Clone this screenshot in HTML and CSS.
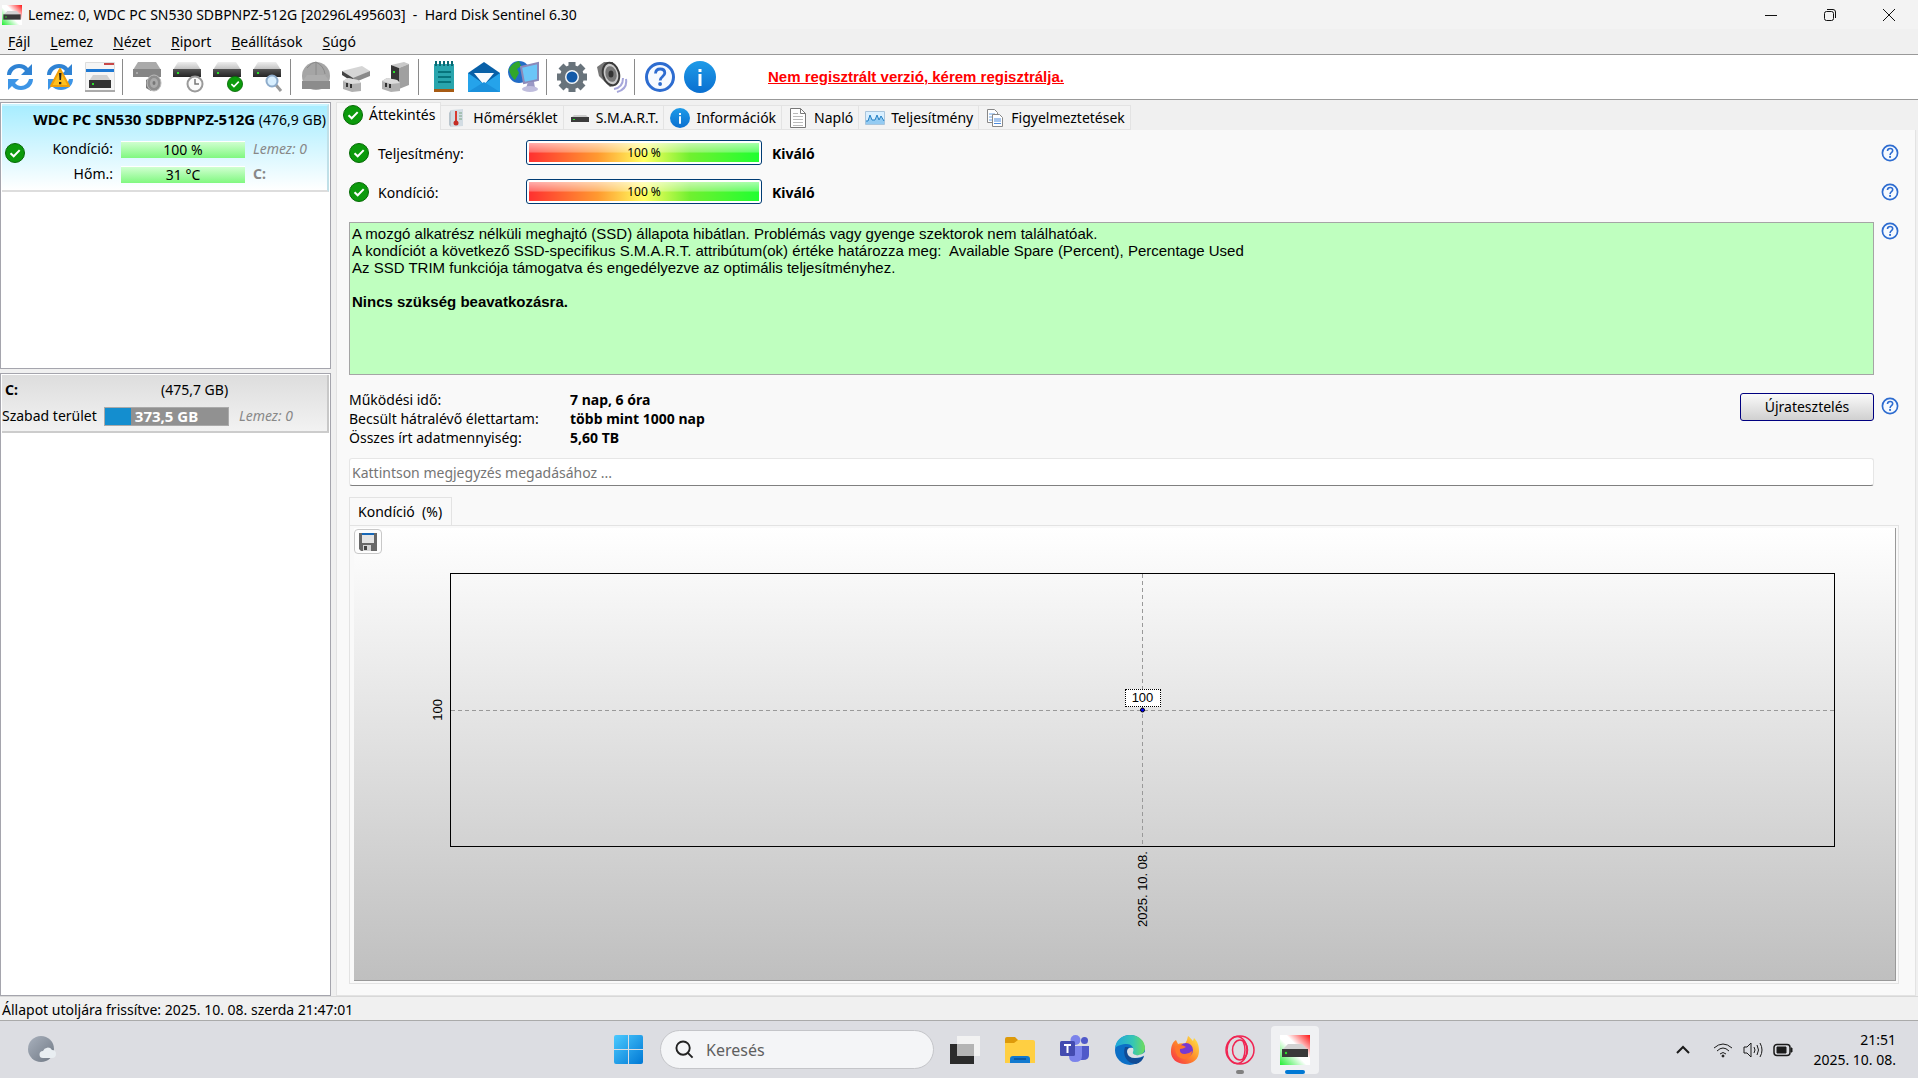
FILE: index.html
```
<!DOCTYPE html>
<html lang="hu">
<head>
    <meta charset="UTF-8">
    <meta name="viewport" content="width=device-width, initial-scale=1.0">
    <title>Hard Disk Sentinel 6.30</title>
    <link rel="stylesheet" href="styles.css">
</head>
<body>
    <!-- Közös ikonok -->
    <svg class="sprites" aria-hidden="true">
        <defs>
            <linearGradient id="blue" x1="0" y1="0" x2="0" y2="1"><stop offset="0" stop-color="#1e9be8"/><stop offset="1" stop-color="#0a6fd0"/></linearGradient>
            <linearGradient id="metal" x1="0" y1="0" x2="0" y2="1"><stop offset="0" stop-color="#eeeeee"/><stop offset="1" stop-color="#bdbdbd"/></linearGradient>
            <linearGradient id="dark" x1="0" y1="0" x2="0" y2="1"><stop offset="0" stop-color="#555555"/><stop offset="1" stop-color="#252525"/></linearGradient>
            <linearGradient id="win" x1="0" y1="0" x2="1" y2="1"><stop offset="0" stop-color="#4ccaff"/><stop offset="1" stop-color="#0078d4"/></linearGradient>
            <linearGradient id="edge-top" x1="0" y1="0" x2="1" y2="0"><stop offset="0" stop-color="#1fa5dc"/><stop offset="0.6" stop-color="#36c6b4"/><stop offset="1" stop-color="#6fdc5c"/></linearGradient>
            <linearGradient id="fire" x1="1" y1="0" x2="0" y2="1"><stop offset="0" stop-color="#fff04a"/><stop offset="0.5" stop-color="#ff8a2a"/><stop offset="1" stop-color="#f5254c"/></linearGradient>
            <linearGradient id="logo" x1="0" y1="1" x2="1" y2="0"><stop offset="0" stop-color="#22ee33"/><stop offset="0.45" stop-color="#ffffff"/><stop offset="0.6" stop-color="#ffffff"/><stop offset="1" stop-color="#ff1414"/></linearGradient>
            <linearGradient id="moon" x1="0" y1="0" x2="1" y2="1"><stop offset="0" stop-color="#a9b1bd"/><stop offset="1" stop-color="#6f7884"/></linearGradient>
        </defs>
        <symbol id="i-check" viewBox="0 0 20 20">
            <circle cx="10" cy="10" r="9.5" fill="#0c9a0c" stroke="#066a06"/>
            <path d="M5.5 10.2l3.2 3.1 6-6.2" fill="none" stroke="#fff" stroke-width="2"/>
        </symbol>
        <symbol id="i-help" viewBox="0 0 32 32">
            <circle cx="16" cy="16" r="13.5" fill="#f6faff" stroke="#2d6cd0" stroke-width="3"/>
            <path d="M11.5 12.5c.2-3 2-4.5 4.7-4.5 2.700 0 4.600 1.500 4.600 4 0 3.500-4.600 3.500-4.600 7.500" fill="none" stroke="#2d6cd0" stroke-width="2.800"/>
            <circle cx="16.100" cy="23" r="1.900" fill="#2d6cd0"/>
        </symbol>
        <symbol id="i-info" viewBox="0 0 32 32">
            <circle cx="16" cy="16" r="16" fill="url(#blue)"/>
            <path d="M14.500 13h3v12h-3zM14.500 8h3v3h-3z" fill="#fff"/>
        </symbol>
        <symbol id="i-hdd" viewBox="0 0 28 15">
            <path d="M5 0h18l5 8H0z" fill="url(#metal)"/>
            <path d="M0 7h28v8H0z" fill="url(#dark)"/>
            <path d="M4 10h2v2H4z" fill="#2be02b"/>
        </symbol>
        <symbol id="i-refresh" viewBox="0 0 28 28">
            <path d="M1 12C1 5 7 1 13 1c4 0 7 1.500 9 4l4-4v11H15l4-4c-1.500-1.700-3.500-3-6-3-4 0-7 3-8 7z" fill="#2f83d4"/>
            <path d="M27 16c0 7-6 11-12 11-4 0-7-1.500-9-4l-4 4V16h11l-4 4c1.500 1.700 3.500 3 6 3 4 0 7-3 8-7z" fill="#3d95e6"/>
        </symbol>
        <symbol id="i-speaker" viewBox="0 0 32 32">
            <path d="M18 28c6-1 9-5 9-11M21 31c7-2 10-7 9-13" fill="none" stroke="#a6a6da" stroke-width="2"/>
            <path d="M1 6l7-5 9 0 1 24-4 1L3 15z" fill="#777"/>
            <ellipse cx="15" cy="13" rx="8" ry="11.500" transform="rotate(-15 15 13)" fill="#c9c9c9" stroke="#3b3b3b" stroke-width="2"/>
            <ellipse cx="15" cy="13" rx="5.500" ry="8" transform="rotate(-15 15 13)" fill="#777"/>
            <ellipse cx="15" cy="13" rx="2.500" ry="3.500" fill="#333"/>
        </symbol>
        <symbol id="i-logo" viewBox="0 0 30 30">
            <path d="M0 0h30v30H0z" fill="url(#logo)"/>
            <path d="M8 9h14l5 5H3z" fill="#d2d2d2"/>
            <path d="M2 14h26v8H2z" fill="#393939"/>
            <circle cx="6" cy="18" r="1.200" fill="#2be02b"/>
        </symbol>
    </svg>

    <header class="titlebar">
        <svg class="app-icon"><use href="#i-logo"/></svg>
        <h1>Lemez: 0, WDC PC SN530 SDBPNPZ-512G [20296L495603]&nbsp; -&nbsp; Hard Disk Sentinel 6.30</h1>
        <div class="window-buttons">
            <button aria-label="Kis méret"><svg viewBox="0 0 14 14"><path d="M1 7.500h12"/></svg></button>
            <button aria-label="Előző méret"><svg viewBox="0 0 14 14"><rect x="1.500" y="3.500" width="9" height="9" rx="2"/><path d="M4 1.500h6q2.500 0 2.500 2.500v6"/></svg></button>
            <button aria-label="Bezárás"><svg viewBox="0 0 14 14"><path d="M1 1l12 12M13 1L1 13"/></svg></button>
        </div>
    </header>

    <nav class="menubar">
        <button><u>F</u>ájl</button>
        <button><u>L</u>emez</button>
        <button><u>N</u>ézet</button>
        <button><u>R</u>iport</button>
        <button><u>B</u>eállítások</button>
        <button><u>S</u>úgó</button>
    </nav>

    <div class="toolbar">
        <button aria-label="Frissítés"><svg viewBox="0 0 32 32"><use href="#i-refresh" x="2" y="2" width="28" height="28"/></svg></button>
        <button aria-label="Teljes frissítés"><svg viewBox="0 0 32 32"><use href="#i-refresh" x="2" y="2" width="28" height="28"/><path d="M16 8l9 17H7z" fill="#ffc01e" stroke="#ef9f0a" stroke-width="2" stroke-linejoin="round"/><path d="M15 12h2.500l-.5 7h-1.500zM15 21h2.300v2.300H15z" fill="#222"/></svg></button>
        <button aria-label="Kis ablak"><svg viewBox="0 0 32 32"><path d="M1.500 1.500h29v28h-29z" fill="#f5f5f5" stroke="#ddd"/><path d="M2 8h28v3H2z" fill="#1e78d2"/><path d="M20 2h10v2H20z" fill="#c84848"/><path d="M9 14h14l4 6H5z" fill="#d0d0d0"/><path d="M5 19h22v8H5z" fill="#333"/><path d="M8 22h2v2H8z" fill="#2be02b"/><path d="M1 29h30v2H1z" fill="#aaa"/></svg></button>
        <span class="separator"></span>
        <button aria-label="Zajszint"><svg viewBox="0 0 32 32"><path d="M6 1h18l5 8H1z" fill="#aaa"/><path d="M1 8h28v8H1z" fill="#858585"/><path d="M4 11h2v2H4z" fill="#aaa"/><path d="M14 19l5-3v14l-5-3z" fill="#777"/><ellipse cx="22" cy="22" rx="7" ry="8" fill="#8e8e8e" stroke="#bbb"/><ellipse cx="22" cy="22" rx="4" ry="5" fill="#aaa"/><ellipse cx="22" cy="22" rx="1.500" ry="2" fill="#777"/></svg></button>
        <button aria-label="Rövid teszt"><svg viewBox="0 0 32 32"><use href="#i-hdd" x="1" y="1" width="28" height="15"/><circle cx="23" cy="23" r="7.500" fill="#fafafa" stroke="#9a9a9a" stroke-width="2"/><path d="M23 18v5h4" fill="none" stroke="#777" stroke-width="1.500"/></svg></button>
        <button aria-label="Teszt"><svg viewBox="0 0 32 32"><use href="#i-hdd" x="1" y="1" width="28" height="15"/><use href="#i-check" x="15" y="15" width="16" height="16"/></svg></button>
        <button aria-label="Felület teszt"><svg viewBox="0 0 32 32"><use href="#i-hdd" x="1" y="1" width="28" height="15"/><path d="M24 24l5 6" stroke="#999" stroke-width="3"/><circle cx="20" cy="20" r="5.500" fill="#d8efff" stroke="#8eaccb" stroke-width="2"/></svg></button>
        <span class="separator"></span>
        <button aria-label="Hálózati lemez"><svg viewBox="0 0 32 32"><circle cx="16" cy="15" r="14" fill="#a5a5a5"/><path d="M7 7q5-6 9-6M16 1v14M16 1q8 4 9 12" fill="none" stroke="#8a8a8a"/><path d="M7 14h18l5 7H2z" fill="#adadad"/><path d="M2 20h28v8H2z" fill="#8c8c8c"/></svg></button>
        <button aria-label="Lemez csatlakoztatása"><svg viewBox="0 0 32 32"><path d="M2 10L22 5l8 5-17 8z" fill="#d5d5d5"/><path d="M2 10v4l11 7v-4z" fill="#444"/><path d="M13 17l17-7v5l-17 7z" fill="#8a8a8a"/><path d="M3 20l5-3 10 2 3 3v8l-9 1-9-3z" fill="#b0b0b0"/><path d="M3 20l5-3 10 2 3 3-9 1z" fill="#dcdcdc"/><path d="M6 22h2v4H6zM10 23h2v4h-2z" fill="#333"/></svg></button>
        <button aria-label="Lemez leválasztása"><svg viewBox="0 0 32 32"><path d="M11 4l13-3 5 2-10 4z" fill="#c9c9c9"/><path d="M11 4l8 3v21l-8-2z" fill="#363636"/><path d="M19 7l10-4v21l-10 4z" fill="#a0a0a0"/><path d="M13 10h2v2h-2z" fill="#2be02b"/><path d="M2 20l5-3 10 2 3 3v8l-9 1-9-3z" fill="#b0b0b0"/><path d="M2 20l5-3 10 2 3 3-9 1z" fill="#dcdcdc"/><path d="M5 22h2v4H5zM9 23h2v4H9z" fill="#333"/></svg></button>
        <span class="separator"></span>
        <button aria-label="Napló"><svg viewBox="0 0 32 32"><path d="M6 3h20v26H6z" fill="#29a5ad"/><path d="M6 28h20v3H6z" fill="#a75b14"/><path d="M8 0v5M12 0v5M16 0v5M20 0v5M24 0v5" stroke="#0a6873" stroke-width="2"/><path d="M10 11h13M10 16h13M10 21h13" stroke="#07747c" stroke-width="2"/></svg></button>
        <button aria-label="E-mail"><svg viewBox="0 0 32 32"><path d="M0 12L16 1l16 11v19H0z" fill="#0860a8"/><path d="M6 12h20l-10 12z" fill="#f8fbff"/><path d="M0 12l16 11 16-11v19H0z" fill="#25a3ea"/><path d="M0 31l16-10 16 10z" fill="#1b91dc"/></svg></button>
        <button aria-label="Hálózat"><svg viewBox="0 0 32 32"><circle cx="11" cy="11" r="11" fill="#226cc6"/><path d="M1 8q3-6 10-8l2 5-4 3 2 4-4 7q-5-4-6-11z" fill="#31a62c"/><path d="M13 6l17-4v17l-14 3z" fill="#6bc6f7" stroke="#8b89b9" stroke-width="2"/><path d="M20 21h6l1 6H18z" fill="#9a98c5"/><ellipse cx="22" cy="28" rx="8" ry="3" fill="#bfbddd"/></svg></button>
        <span class="separator"></span>
        <button aria-label="Beállítások"><svg viewBox="0 0 32 32"><path d="M16 1v30M1 16h30M5 5l22 22M27 5L5 27" stroke="#68737b" stroke-width="7"/><circle cx="16" cy="16" r="9.500" fill="#f2f6f9" stroke="#68737b" stroke-width="5"/><circle cx="16" cy="16" r="5.500" fill="#135aa8"/></svg></button>
        <button aria-label="Hang"><svg><use href="#i-speaker"/></svg></button>
        <span class="separator"></span>
        <button aria-label="Súgó"><svg><use href="#i-help"/></svg></button>
        <button aria-label="Névjegy"><svg><use href="#i-info"/></svg></button>
        <a class="register" href="#">Nem regisztrált verzió, kérem regisztrálja.</a>
    </div>

    <main>
        <aside>
            <section class="list disks">
                <div class="disk">
                    <svg class="status-icon"><use href="#i-check"/></svg>
                    <div class="disk-name"><b>WDC PC SN530 SDBPNPZ-512G</b> (476,9 GB)</div>
                    <span class="disk-label">Kondíció:</span>
                    <span class="disk-bar">100 %</span>
                    <i>Lemez: 0</i>
                    <span class="disk-label">Hőm.:</span>
                    <span class="disk-bar">31 °C</span>
                    <b class="drive">C:</b>
                </div>
            </section>
            <section class="list partitions">
                <div class="partition">
                    <div class="partition-head"><b>C:</b><span>(475,7 GB)</span></div>
                    <div class="partition-row">
                        <span class="free-label">Szabad terület</span>
                        <b class="free-bar">373,5 GB</b>
                        <i>Lemez: 0</i>
                    </div>
                </div>
            </section>
        </aside>

        <section class="content">
            <div class="tabs" role="tablist">
                <button class="active" role="tab"><svg><use href="#i-check"/></svg>Áttekintés</button>
                <button role="tab"><svg viewBox="0 0 20 20"><path d="M4 2l12-1v17l-12 1z" fill="#d2dce3"/><path d="M2 5l2-3v17l-2-2z" fill="#b8c4cc"/><path d="M12 5h3M12 8h3M12 11h3" stroke="#78a582"/><path d="M9 3v12" stroke="#d83a30" stroke-width="2"/><circle cx="9" cy="15" r="2.500" fill="#c52d25"/></svg>Hőmérséklet</button>
                <button role="tab"><svg viewBox="0 0 20 20"><path d="M4 7h12l3 3H1z" fill="#ccc"/><path d="M1 9h18v5H1z" fill="#3b3b3b"/><path d="M3 11h2v1H3z" fill="#2be02b"/></svg>S.M.A.R.T.</button>
                <button role="tab"><svg><use href="#i-info"/></svg>Információk</button>
                <button role="tab"><svg viewBox="0 0 20 20"><path d="M2.500.5h10l5 5v14h-15z" fill="#fff" stroke="#777"/><path d="M12.500.5v5h5" fill="none" stroke="#777"/><path d="M5 5.500h5M5 8.500h10M5 11.500h10M5 14.500h10M5 17.500h10" stroke="#bbb"/></svg>Napló</button>
                <button role="tab"><svg viewBox="0 0 20 20"><path d="M.5 3.500h19v13H.5z" fill="#d9efff" stroke="#a9c5dc"/><path d="M1 13h2l2-6 2 5h3l2-5 2 5 2-4 3 5v3H1z" fill="#94cbf2"/><path d="M1 13h2l2-6 2 5h3l2-5 2 5 2-4 3 5" fill="none" stroke="#2581c4"/></svg>Teljesítmény</button>
                <button role="tab"><svg viewBox="0 0 20 20"><path d="M2.500 1.500h7l3 3v10h-10z" fill="#fff" stroke="#888"/><path d="M4 6h6M4 9h6M4 12h6" stroke="#6aa2e5"/><path d="M7.500 6.500h7l3 3v9h-10z" fill="#fff" stroke="#888"/><path d="M9 11h7M9 13h7M9 15.500h7" stroke="#4d8bdc"/></svg>Figyelmeztetések</button>
            </div>

            <div class="page">
                <div class="rating">
                    <svg class="status-icon"><use href="#i-check"/></svg>
                    <span class="rating-label">Teljesítmény:</span>
                    <div class="rating-bar"><span>100 %</span></div>
                    <b>Kiváló</b>
                    <button class="help" aria-label="Súgó"><svg><use href="#i-help"/></svg></button>
                </div>
                <div class="rating">
                    <svg class="status-icon"><use href="#i-check"/></svg>
                    <span class="rating-label">Kondíció:</span>
                    <div class="rating-bar"><span>100 %</span></div>
                    <b>Kiváló</b>
                    <button class="help" aria-label="Súgó"><svg><use href="#i-help"/></svg></button>
                </div>

                <div class="row report-row">
                    <div class="report">
                        <p>A mozgó alkatrész nélküli meghajtó (SSD) állapota hibátlan. Problémás vagy gyenge szektorok nem találhatóak.</p>
                        <p>A kondíciót a következő SSD-specifikus S.M.A.R.T. attribútum(ok) értéke határozza meg:&nbsp; Available Spare (Percent), Percentage Used</p>
                        <p>Az SSD TRIM funkciója támogatva és engedélyezve az optimális teljesítményhez.</p>
                        <p class="advice">Nincs szükség beavatkozásra.</p>
                    </div>
                    <button class="help" aria-label="Súgó"><svg><use href="#i-help"/></svg></button>
                </div>

                <div class="row stats-row">
                    <dl>
                        <dt>Működési idő:</dt><dd>7 nap, 6 óra</dd>
                        <dt>Becsült hátralévő élettartam:</dt><dd>több mint 1000 nap</dd>
                        <dt>Összes írt adatmennyiség:</dt><dd>5,60 TB</dd>
                    </dl>
                    <button class="retest">Újratesztelés</button>
                    <button class="help" aria-label="Súgó"><svg><use href="#i-help"/></svg></button>
                </div>

                <input class="comment" type="text" aria-label="Megjegyzés" placeholder="Kattintson megjegyzés megadásához ...">

                <button class="chart-tab" role="tab">Kondíció&nbsp; (%)</button>
                <div class="chart-panel">
                    <div class="chart">
                        <button class="save" aria-label="Mentés"><svg viewBox="0 0 18 18"><path d="M0 0h18v18H2l-2-2z" fill="#686868"/><path d="M3 0h12v10H3z" fill="#e4e4e4"/><path d="M3 0h12v2H3z" fill="#1768b8"/><path d="M4 12h8v6H4z" fill="#d5d5d5"/><path d="M5 13h3v4H5z" fill="#444"/></svg></button>
                        <span class="y-label">100</span>
                        <div class="plot">
                            <svg width="100%" height="100%">
                                <line x1="50%" y1="0" x2="50%" y2="100%"/>
                                <line x1="0" y1="50%" x2="100%" y2="50%"/>
                                <circle cx="50%" cy="50%" r="2"/>
                            </svg>
                            <span class="point-label">100</span>
                        </div>
                        <span class="x-label">2025. 10. 08.</span>
                    </div>
                </div>
            </div>
        </section>
    </main>

    <footer class="statusbar">Állapot utoljára frissítve: 2025. 10. 08. szerda 21:47:01</footer>

    <div class="taskbar">
        <button class="weather" aria-label="Időjárás"><svg viewBox="0 0 28 28"><circle cx="13" cy="13" r="13" fill="url(#moon)"/><path d="M15 22a3.500 3.500 0 0 1 0-7 5 5 0 0 1 9-1 4 4 0 0 1 0 8z" fill="#e9eef2"/></svg></button>
        <div class="apps">
            <button class="app" aria-label="Start"><svg viewBox="0 0 30 30"><path d="M0 2q0-2 2-2h12v14H0zM15 0h12q2 0 2 2v12H15zM0 15h14v14H2q-2 0-2-2zM15 15h14v12q0 2-2 2H15z" fill="url(#win)"/></svg></button>
            <label class="search">
                <svg viewBox="0 0 20 20"><circle cx="8.500" cy="8.500" r="7"/><path d="M13.500 13.500l5 5"/></svg>
                <input type="text" aria-label="Keresés" placeholder="Keresés">
            </label>
            <button class="app" aria-label="Feladatnézet"><svg viewBox="0 0 30 30"><path d="M0 9h24v20H0z" fill="#2b2b2b"/><path d="M7 1h23v20H7z" fill="#f2f2f2"/><path d="M7 9h17v12H7z" fill="#b4b4b4"/></svg></button>
            <button class="app" aria-label="Fájlkezelő"><svg viewBox="0 0 30 30"><path d="M0 4q0-2 2-2h8l3 3h15v6H0z" fill="#dd9a0b"/><path d="M0 8h9l4-3h15q2 0 2 2v21H0z" fill="#ffcf42"/><path d="M5 28v-4q0-3 3-3h14q3 0 3 3v4z" fill="#1279cf"/><path d="M9 24h12" stroke="#0b4f93" stroke-width="1.500"/></svg></button>
            <button class="app" aria-label="Teams"><svg viewBox="0 0 30 30"><circle cx="24.500" cy="5.500" r="3.500" fill="#5059c9"/><circle cx="15.500" cy="5" r="5" fill="#7b83eb"/><path d="M20 11h9v9q0 5-6 5h-3z" fill="#5059c9"/><path d="M9 11h13v10q0 6-7 6-6 0-6-6z" fill="#7b83eb"/><rect y="6" width="15" height="15" rx="1.500" fill="#434bb0"/><path d="M4 10h7M7.500 10v8" stroke="#fff" stroke-width="2"/></svg></button>
            <button class="app" aria-label="Edge"><svg viewBox="0 0 30 30"><circle cx="15" cy="15" r="15" fill="#0c6fc6"/><path d="M0 13C1 5 7 0 15 0c9 0 15 6 15 13 0 5-4 8-9 7-3 0-4-2-3-4 1-4-2-7-6-7-5 0-10 2-12 4z" fill="url(#edge-top)"/><path d="M10 12c-3 8 2 17 11 17 4-1 7-4 8-8-4 3-9 3-13 0-3-2-4-6-2-9z" fill="#114c96"/><path d="M18 13q-6-1-6 4 1 6 8 6 6 0 10-3v-3q-4 4-9 3-4-1-3-3 1-2 0-4z" fill="#dde0e4"/></svg></button>
            <button class="app" aria-label="Firefox"><svg viewBox="0 0 30 30"><path d="M1 17C1 10 3 7 6 5l2 4c2-1 5-1 7 0l2-4 1-4c2 1 3 3 5 5l1-3c4 4 5 8 5 13 0 8-6 13-14 13S1 24 1 17z" fill="url(#fire)"/><circle cx="16" cy="15" r="7" fill="#7839d1"/><path d="M5 12q5-4 11 0-3 2-6 2-1 5 5 5 4 0 7-3 0 7-8 8-9-1-9-12z" fill="#ff762b"/></svg></button>
            <button class="app" aria-label="Opera"><svg viewBox="0 0 30 30" fill="none" stroke="#f02552" stroke-width="1.500"><circle cx="15" cy="15" r="14"/><ellipse cx="12" cy="15" rx="10" ry="13.500"/><ellipse cx="15" cy="15" rx="7.500" ry="10"/><path d="M18 6q4 9 0 18"/></svg><span class="running"></span></button>
            <button class="app current" aria-label="Hard Disk Sentinel"><svg><use href="#i-logo"/></svg><span class="running"></span></button>
        </div>
        <div class="tray">
            <button aria-label="Rejtett ikonok"><svg viewBox="0 0 20 20"><path d="M4 13l6-6 6 6" stroke-width="2"/></svg></button>
            <button class="system" aria-label="Hálózat, hang, akkumulátor">
                <svg viewBox="0 0 20 20"><path d="M1 8q9-8 18 0M4 11q6-6 12 0M7 14q3-3 6 0"/><circle cx="10" cy="16" r="1" fill="#1b1b1b"/></svg>
                <svg viewBox="0 0 20 20"><path d="M1 7h3l4-4v14l-4-4H1zM11 7q2 3 0 6M14 5q3 5 0 10M17 3q4 7 0 14"/></svg>
                <svg viewBox="0 0 20 20"><rect x="1" y="4.500" width="16" height="11" rx="3" stroke-width="1.500"/><path d="M4 7h9v6H4zM18 8v4h1V8z" fill="#1b1b1b"/></svg>
            </button>
            <time>21:51<br>2025. 10. 08.</time>
        </div>
    </div>
</body>
</html>
```
FILE: styles.css
```
* {
    box-sizing: border-box;
}

body {
    display: flex;
    flex-direction: column;
    margin: 0;
    min-height: 100vh;
    font-family: "Noto Sans", "Open Sans", sans-serif;
    font-size: 14px;
    line-height: 20px;
    background: #f0f0f0;
    color: #000;
}

button {
    padding: 0;
    border: none;
    background: none;
    font: inherit;
    color: inherit;
}

svg {
    display: block;
    flex-shrink: 0;
}

.sprites {
    position: absolute;
    width: 0;
    height: 0;
}

.status-icon {
    width: 20px;
    height: 20px;
}

/* Title bar and menu */
.titlebar {
    display: flex;
    align-items: center;
    height: 29px;
    padding-left: 2px;
    background: #f3f3f3;
}

.app-icon {
    width: 20px;
    height: 20px;
}

h1 {
    flex: 1;
    margin: 0 0 0 6px;
    font-size: 14px;
    font-weight: normal;
}

.window-buttons {
    display: flex;
}

.window-buttons button {
    display: flex;
    justify-content: center;
    width: 59px;
}

.window-buttons svg {
    width: 14px;
    height: 14px;
    fill: none;
    stroke: #111;
}

.menubar {
    display: flex;
    gap: 20px;
    height: 25px;
    padding-left: 8px;
}

.menubar u {
    text-underline-offset: 2px;
}

/* Toolbar */
.toolbar {
    display: flex;
    align-items: center;
    height: 46px;
    border-top: 1px solid #999;
    border-bottom: 1px solid #999;
    background: #fff;
}

.toolbar button {
    display: flex;
    justify-content: center;
    width: 40px;
}

.toolbar svg {
    width: 32px;
    height: 32px;
}

.separator {
    width: 8px;
    height: 36px;
    background: linear-gradient(#8a8a8a, #8a8a8a) 2px 0 / 1px 100% no-repeat;
}

.register {
    margin-left: 48px;
    font-family: "Liberation Sans", Arial, sans-serif;
    font-size: 15px;
    font-weight: bold;
    color: #f00;
}

/* Main layout */
main {
    display: flex;
    flex: 1;
    gap: 5px;
    padding: 2px 2px 0 0;
}

aside {
    display: flex;
    flex-direction: column;
    gap: 4px;
    width: 331px;
}

.list {
    padding: 1px;
    border: 1px solid #a5a5ad;
    background: #fff;
}

.disks {
    height: 267px;
}

.partitions {
    flex: 1;
}

.list i,
.drive {
    color: #888;
}

.disk {
    display: grid;
    grid-template-columns: 20px 80px 124px 1fr;
    grid-template-rows: 26px 34px 16px;
    column-gap: 8px;
    align-items: center;
    height: 88px;
    padding-left: 3px;
    border-top: 2px solid #c8f4ff;
    border-right: 2px solid #c0e0e8;
    border-bottom: 2px solid #ddd;
    background: linear-gradient(#a8edff, #fff);
}

.disk .status-icon {
    grid-row: 1 / 4;
    margin-top: 18px;
}

.disk-name {
    grid-column: 2 / 5;
    justify-self: end;
    padding-right: 1px;
    white-space: nowrap;
}

.disk-name b {
    font-size: 15px;
}

.disk-label {
    grid-column: 2;
    text-align: right;
}

.disk-bar {
    height: 17px;
    border-top: 1px solid #fff;
    background: linear-gradient(#d0ffd0, #80f880);
    line-height: 15px;
    text-align: center;
}

.partition {
    height: 58px;
    border-right: 2px solid #c8c8c8;
    border-bottom: 2px solid #ccc;
    background: linear-gradient(#ddd, #f2f2f2);
}

.partition-head {
    display: grid;
    grid-template-columns: 156px 1fr;
    padding: 5px 3px 4px;
}

.partition-row {
    display: flex;
    align-items: center;
    height: 24px;
}

.free-label {
    width: 102px;
}

.free-bar {
    width: 125px;
    height: 19px;
    margin-right: 10px;
    border: 1px solid #aaa;
    background: linear-gradient(90deg, #148ecf 26px, #919191 26px);
    color: #fff;
    font-size: 15px;
    line-height: 17px;
    text-align: center;
}

/* Tabs */
.content {
    display: flex;
    flex: 1;
    flex-direction: column;
    min-width: 0;
}

.tabs {
    display: flex;
    align-items: flex-end;
    height: 28px;
}

.tabs button {
    display: flex;
    align-items: center;
    gap: 6px;
    height: 25px;
    padding: 0 5px 0 6px;
    border: 1px solid #e3e3e3;
    border-left: none;
    background: #f3f3f3;
    white-space: nowrap;
}

.tabs .active {
    align-self: stretch;
    height: auto;
    padding-bottom: 3px;
    border-bottom: none;
    border-left: 1px solid #e3e3e3;
    background: #f9f9f9;
}

.tabs svg {
    width: 20px;
    height: 20px;
}

.page {
    display: flex;
    flex: 1;
    flex-direction: column;
    padding: 3px 16px 11px 12px;
    border: 1px solid #e3e3e3;
    border-top: none;
    background: #f9f9f9;
}

.rating {
    display: flex;
    align-items: center;
    height: 39px;
}

.rating-label {
    width: 148px;
    margin-left: 9px;
}

.rating-label,
.rating b {
    padding-top: 2px;
}

.rating-bar {
    width: 236px;
    height: 25px;
    margin-right: 10px;
    padding: 2px;
    border: 1px solid #003c74;
    border-radius: 3px;
    background: #fff;
}

.rating-bar span {
    display: block;
    background:
        linear-gradient(rgba(255, 255, 255, 0.6), rgba(255, 255, 255, 0.3) 45%, rgba(255, 255, 255, 0) 55%),
        linear-gradient(90deg, #ff3030, #ff9a30 30%, #ffff60 50%, #70f030 70%, #20ff30);
    font-size: 12px;
    line-height: 19px;
    text-align: center;
    word-spacing: normal;
}

.help {
    margin-left: auto;
}

.help svg {
    width: 18px;
    height: 18px;
}

.row {
    display: flex;
    align-items: flex-start;
    gap: 7px;
}

.report-row {
    margin-top: 11px;
}

.report {
    flex: 1;
    height: 153px;
    padding: 2px;
    border: 1px solid #a5a5a5;
    background: #bfffbf;
    font-family: "Liberation Sans", Arial, sans-serif;
    font-size: 15px;
    line-height: 17px;
}

.report p {
    margin: 0;
}

.report .advice {
    margin-top: 17px;
    font-weight: bold;
}

.stats-row {
    margin-top: 15px;
}

dl {
    display: grid;
    flex: 1;
    grid-template-columns: 221px 1fr;
    margin: 0;
    line-height: 19px;
}

dd {
    margin: 0;
    font-weight: bold;
}

.retest {
    width: 134px;
    height: 28px;
    margin-top: 3px;
    border: 1px solid #000080;
    border-radius: 3px;
    background: linear-gradient(#fafafa, #d0d0d0);
}

.stats-row .help {
    margin-top: 7px;
}

.comment {
    height: 28px;
    margin: 11px 25px 11px 0;
    padding: 0 2px;
    border: 1px solid #e6e6e6;
    border-bottom-color: #808080;
    border-radius: 3px;
    font: inherit;
}

.comment::placeholder {
    color: #757575;
}

/* Chart */
.chart-tab {
    align-self: flex-start;
    height: 28px;
    padding: 0 9px 0 8px;
    border: 1px solid #e3e3e3;
    border-bottom: none;
}

.chart-panel {
    display: flex;
    flex: 1;
    padding: 2px 2px 2px 4px;
    border: 1px solid #e3e3e3;
}

.chart {
    display: grid;
    flex: 1;
    grid-template-columns: 96px 1fr 60px;
    grid-template-rows: 45px 1fr 133px;
    border-right: 1px solid #999;
    border-bottom: 1px solid #999;
    background: linear-gradient(#fff, #bfbfbf);
    font-family: "Liberation Sans", Arial, sans-serif;
    font-size: 13px;
}

.save {
    display: flex;
    align-items: center;
    justify-content: center;
    width: 28px;
    height: 25px;
    margin-top: 1px;
    border: 1px solid #c8c8c8;
    border-radius: 4px;
    background: #fdfdfd;
}

.save svg {
    width: 18px;
    height: 18px;
}

.y-label,
.x-label {
    writing-mode: vertical-rl;
    transform: rotate(180deg);
}

.y-label {
    grid-row: 2;
    grid-column: 1;
    align-self: center;
    justify-self: end;
    margin-right: 2px;
}

.plot {
    position: relative;
    grid-row: 2;
    grid-column: 2;
    border: 1px solid #000;
}

.plot svg {
    position: absolute;
}

.plot line {
    stroke: #999;
    stroke-dasharray: 4 3;
    shape-rendering: crispEdges;
}

.plot circle {
    fill: #00f;
    stroke: #000;
}

.point-label {
    position: absolute;
    bottom: calc(50% + 3px);
    left: calc(50% - 18px);
    width: 36px;
    border: 1px dotted #000;
    background: #fff;
    line-height: 16px;
    text-align: center;
}

.x-label {
    grid-row: 3;
    grid-column: 2;
    justify-self: center;
    margin-top: 4px;
    text-align: right;
}

/* Status bar and taskbar */
.statusbar {
    height: 24px;
    padding: 3px 2px;
    border-top: 1px solid #d8d8d8;
}

.taskbar {
    display: grid;
    grid-template-columns: 1fr auto 1fr;
    align-items: center;
    height: 58px;
    padding: 0 22px 0 28px;
    border-top: 1px solid #aaa;
    background: #dcdde2;
}

.weather {
    width: 28px;
}

.apps {
    display: flex;
    align-items: center;
    gap: 7px;
}

.app {
    position: relative;
    width: 48px;
    height: 48px;
    border-radius: 4px;
}

.app svg {
    width: 30px;
    height: 30px;
    margin: 0 auto;
}

.search {
    display: flex;
    align-items: center;
    gap: 12px;
    width: 274px;
    height: 39px;
    padding-left: 14px;
    border: 1px solid #c4c5c9;
    border-radius: 20px;
    background: #f4f5f7;
}

.search svg {
    width: 19px;
    height: 19px;
    fill: none;
    stroke: #222;
    stroke-width: 2;
}

.search input {
    width: 200px;
    padding: 0;
    border: none;
    background: none;
    font: inherit;
    font-size: 16px;
}

.search input::placeholder {
    color: #5f5f5f;
}

.current {
    background: #f0f1f3;
}

.running {
    position: absolute;
    bottom: 0;
    left: 20px;
    width: 8px;
    height: 4px;
    border-radius: 2px;
    background: #808080;
}

.current .running {
    left: 14px;
    width: 20px;
    background: #0078d4;
}

.tray {
    display: flex;
    align-items: center;
    justify-content: flex-end;
    gap: 20px;
}

.tray svg {
    width: 20px;
    height: 20px;
    fill: none;
    stroke: #1b1b1b;
}

.system {
    display: flex;
    gap: 10px;
}

time {
    text-align: right;
}
```
